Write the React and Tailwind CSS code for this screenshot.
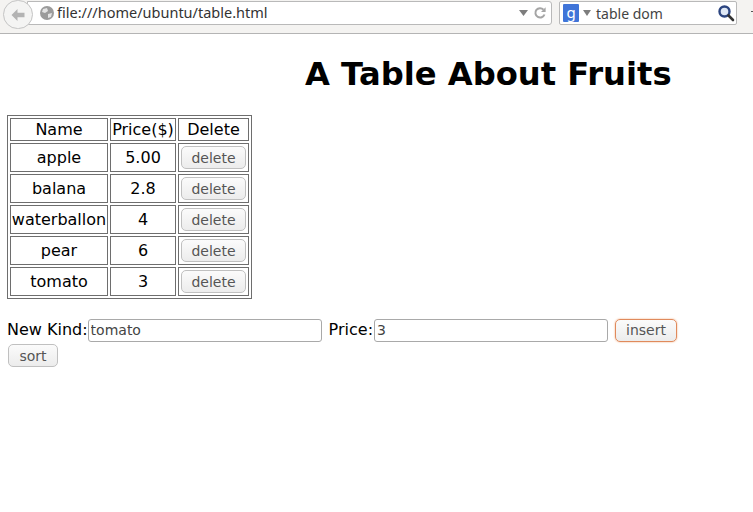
const rows = [
  { name: 'apple', price: '5.00' },
  { name: 'balana', price: '2.8' },
  { name: 'waterballon', price: '4' },
  { name: 'pear', price: '6' },
  { name: 'tomato', price: '3' },
];

const btn =
  'rounded-[5px] border bg-gradient-to-b from-[#fbfbfb] to-[#ececec] text-[14px] leading-none text-[#555]';

const Toolbar = () => (
  <div className="h-[34px] bg-[#f4f3f1] border-b border-[#b4b4b4] flex items-start pt-[1px] font-['Noto_Sans',sans-serif] relative">
    <div className="flex items-center w-[525px] h-[24px] ml-[27px] pl-[11px] pr-[4px] bg-white border border-[#b9b9b9] rounded-r-[3px]">
      <svg width="16" height="16" viewBox="0 0 16 16" className="shrink-0">
        <circle cx="8" cy="8" r="7" fill="#9b9b9b" />
        <path d="M4 4 L8 3 L9 6 L6 8 L3 7 Z M9 9 L13 8 L12 12 L9 13 Z" fill="#e4e4e4" />
      </svg>
      <span className="ml-[2px] text-[14.5px] text-[#333] whitespace-nowrap">file:///home/ubuntu/table.html</span>
      <svg width="9" height="6" viewBox="0 0 9 6" className="ml-auto mr-[5px] shrink-0">
        <path d="M0 0 H9 L4.5 6 Z" fill="#7d7d7d" />
      </svg>
      <svg width="14" height="14" viewBox="0 0 14 14" className="shrink-0">
        <path d="M11.5 8.5 A4.7 4.7 0 1 1 10.5 3.6" fill="none" stroke="#a5a5a5" strokeWidth="2" />
        <path d="M12.6 1.2 V6 H8 Z" fill="#a5a5a5" />
      </svg>
    </div>
    <div className="flex items-center w-[178px] h-[24px] ml-[7px] pl-[3px] pr-[1px] bg-white border border-[#b9b9b9] rounded-[2px]">
      <span className="w-[16px] h-[18px] bg-[#3f74d8] text-white text-[15px] leading-[16px] text-center rounded-[1px] shrink-0">g</span>
      <svg width="8" height="6" viewBox="0 0 8 6" className="ml-[4px] shrink-0">
        <path d="M0 0 H8 L4 6 Z" fill="#7d7d7d" />
      </svg>
      <span className="ml-[5px] text-[14px] text-[#444] whitespace-nowrap">table dom</span>
      <svg width="18" height="18" viewBox="0 0 18 18" className="ml-auto shrink-0">
        <circle cx="7.5" cy="7.5" r="5" fill="#dfe8f5" stroke="#2c4580" strokeWidth="2.4" />
        <path d="M11.5 11.5 L16 16" stroke="#333" strokeWidth="2.6" strokeLinecap="round" />
      </svg>
    </div>
    <div className="absolute left-[3px] top-[0px] w-[30px] h-[29px] rounded-full bg-[#f4f4f3] border border-[#c4c4c4] flex items-center justify-center">
      <svg width="16" height="14" viewBox="0 0 16 14">
        <path d="M7.5 1 L1.5 7 L7.5 13 V9.2 H14.5 V4.8 H7.5 Z" fill="#b3b3b3" />
      </svg>
    </div>
    <span className="absolute right-0 top-[11px] w-[2px] h-[1px] bg-[#555]" />
  </div>
);

export default function App() {
  return (
    <div className="w-[753px] h-[512px] bg-white overflow-hidden font-['DejaVu_Sans',sans-serif] text-[16px] text-black">
      <Toolbar />

      <h1 className="pl-[305px] mt-[20px] text-[32.2px] leading-[40px] font-bold whitespace-nowrap">A Table About Fruits</h1>

      <div className="px-[7px] mt-[21px]">
        <table className="border border-[#6e6e6e] border-separate border-spacing-[2px] text-center">
          <tbody>
            <tr className="h-[23px]">
              <td className="w-[98px] border border-[#6e6e6e] p-0 leading-[21px]">Name</td>
              <td className="w-[66px] border border-[#6e6e6e] p-0 leading-[21px]">Price($)</td>
              <td className="w-[71px] border border-[#6e6e6e] p-0 leading-[21px]">Delete</td>
            </tr>
            {rows.map((row) => (
              <tr key={row.name} className="h-[29px]">
                <td className="border border-[#6e6e6e] p-0">{row.name}</td>
                <td className="border border-[#6e6e6e] p-0">{row.price}</td>
                <td className="border border-[#6e6e6e] p-0">
                  <button className={`${btn} border-[#c0c0c0] block mx-auto w-[65px] h-[23px]`}>delete</button>
                </td>
              </tr>
            ))}
          </tbody>
        </table>
      </div>

      <div className="px-[7px] mt-[19px] w-[700px]">
        <div className="flex items-center h-[24px]">
          <span>New Kind:</span>
          <input
            readOnly
            value="tomato"
            className="w-[234px] h-[23px] px-[2px] text-[14px] text-[#444] bg-white border border-[#a9a9a9] rounded-[3px]"
          />
          <span className="ml-[7px]">Price:</span>
          <input
            readOnly
            value="3"
            className="ml-[1px] w-[234px] h-[23px] px-[2px] text-[14px] text-[#444] bg-white border border-[#a9a9a9] rounded-[3px]"
          />
          <button className={`${btn} border-[#e08a5c] shadow-[0_0_2px_#f0a878] ml-[7px] w-[62px] h-[23px]`}>insert</button>
        </div>
        <button className={`${btn} border-[#c0c0c0] block ml-[1px] mt-[2px] w-[50px] h-[23px]`}>sort</button>
      </div>
    </div>
  );
}
